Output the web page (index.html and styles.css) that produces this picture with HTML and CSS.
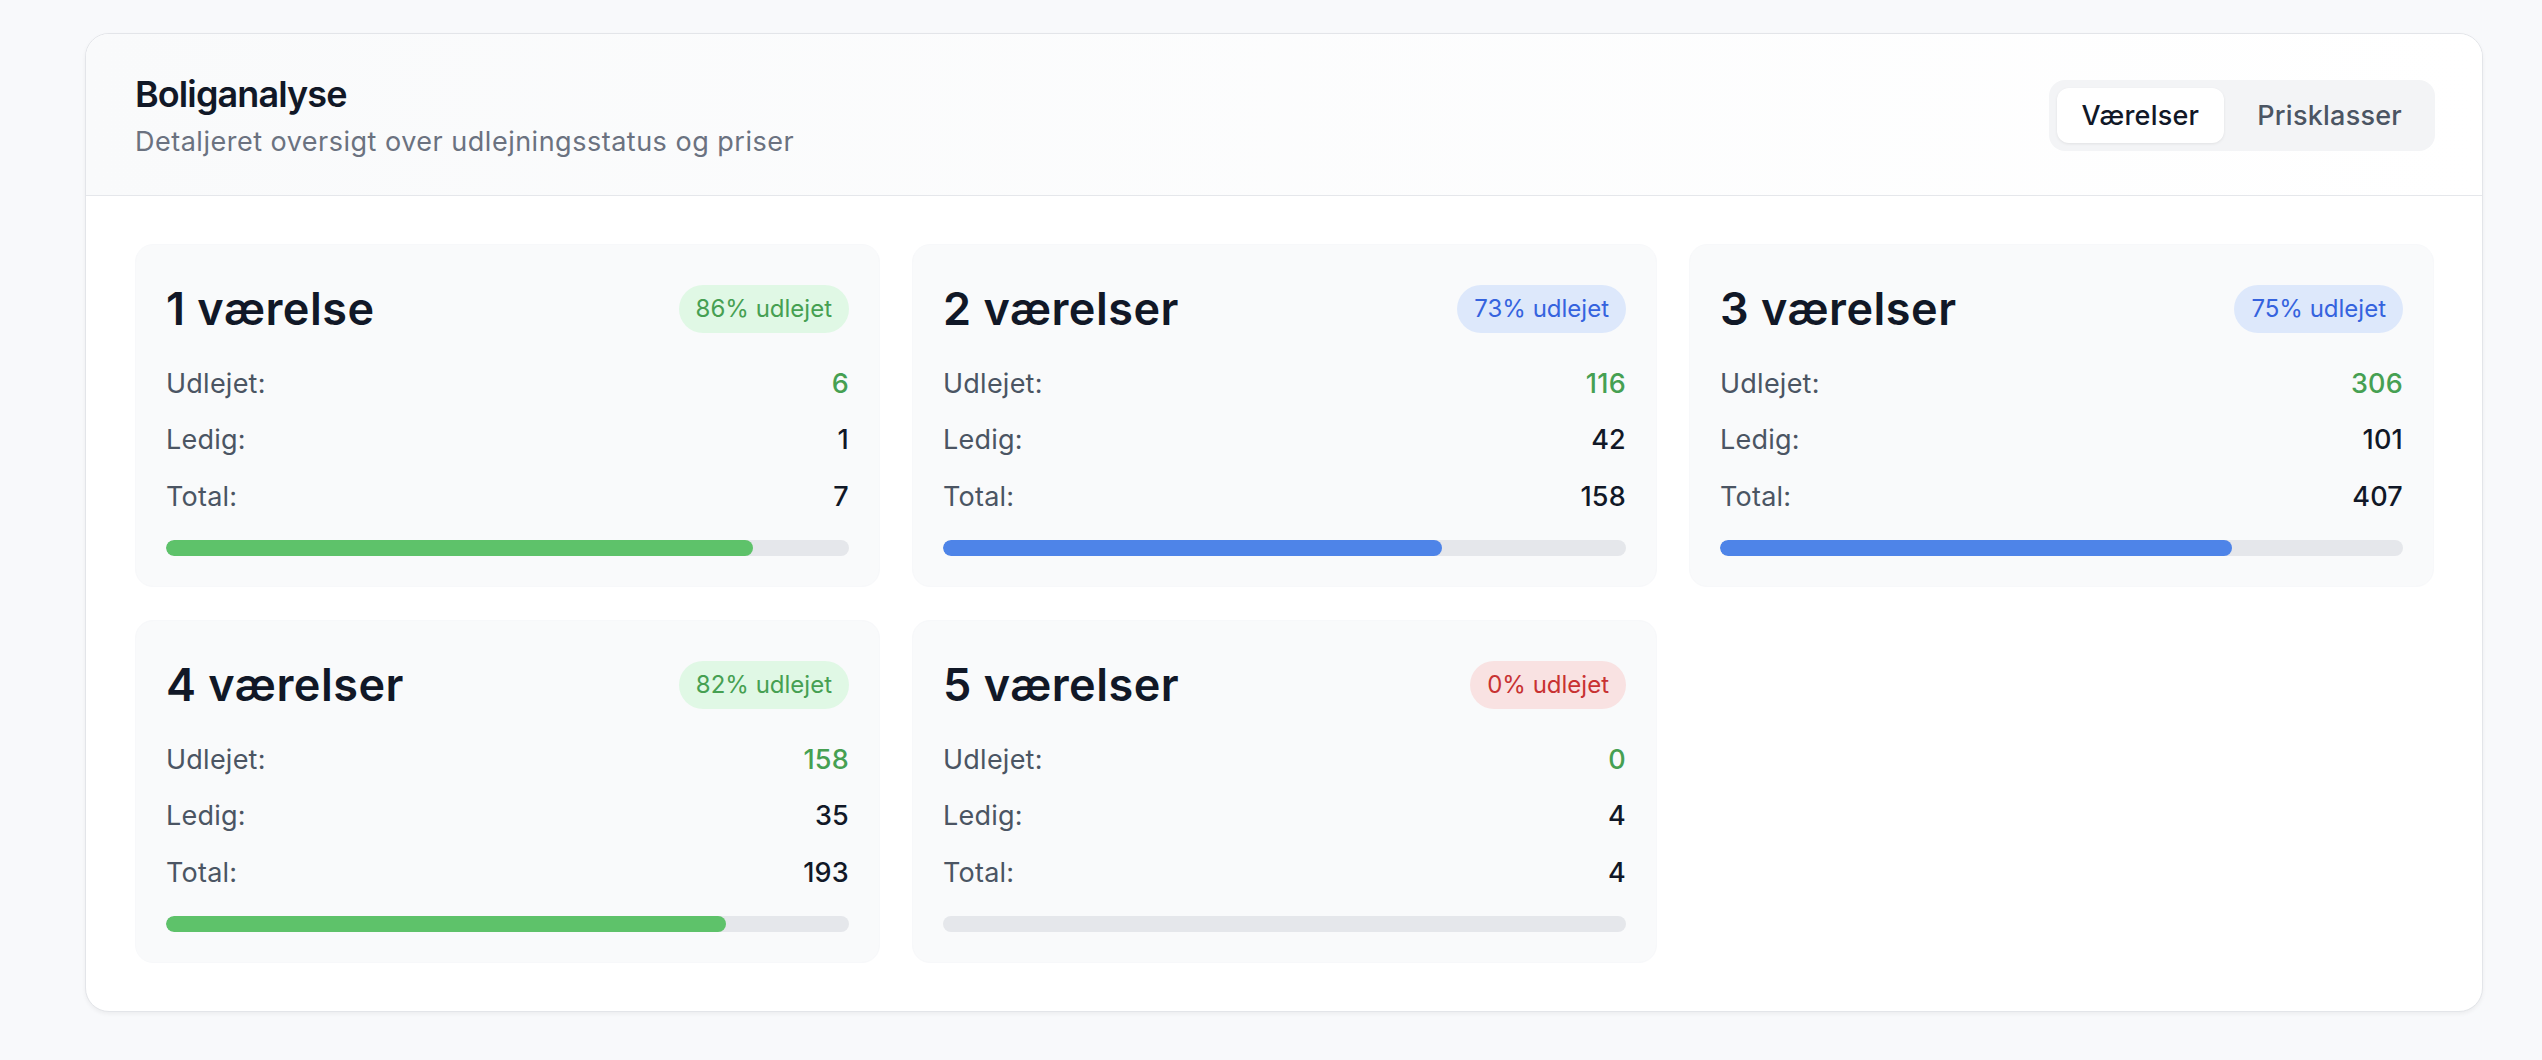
FILE: index.html
```html
<!DOCTYPE html>
<html lang="da">
<head>
<meta charset="utf-8">
<title>Boliganalyse</title>
<link rel="stylesheet" href="styles.css">
</head>
<body>
<div class="page">
  <section class="panel">
    <header class="panel-head">
      <div class="head-text">
        <h1 class="title">Boliganalyse</h1>
        <p class="subtitle">Detaljeret oversigt over udlejningsstatus og priser</p>
      </div>
      <div class="tabs">
        <button class="tab tab-active">Værelser</button>
        <button class="tab">Prisklasser</button>
      </div>
    </header>
    <div class="panel-body">
      <div class="grid">
        <div class="room">
          <div class="room-head">
            <h2 class="room-title">1 værelse</h2>
            <span class="badge badge-green">86% udlejet</span>
          </div>
          <div class="rows">
            <div class="row"><span class="label">Udlejet:</span><span class="val val-green">6</span></div>
            <div class="row"><span class="label">Ledig:</span><span class="val">1</span></div>
            <div class="row"><span class="label">Total:</span><span class="val">7</span></div>
          </div>
          <div class="track"><div class="fill fill-green" style="width: 86%"></div></div>
        </div>
        <div class="room">
          <div class="room-head">
            <h2 class="room-title">2 værelser</h2>
            <span class="badge badge-blue">73% udlejet</span>
          </div>
          <div class="rows">
            <div class="row"><span class="label">Udlejet:</span><span class="val val-green">116</span></div>
            <div class="row"><span class="label">Ledig:</span><span class="val">42</span></div>
            <div class="row"><span class="label">Total:</span><span class="val">158</span></div>
          </div>
          <div class="track"><div class="fill fill-blue" style="width: 73%"></div></div>
        </div>
        <div class="room">
          <div class="room-head">
            <h2 class="room-title">3 værelser</h2>
            <span class="badge badge-blue">75% udlejet</span>
          </div>
          <div class="rows">
            <div class="row"><span class="label">Udlejet:</span><span class="val val-green">306</span></div>
            <div class="row"><span class="label">Ledig:</span><span class="val">101</span></div>
            <div class="row"><span class="label">Total:</span><span class="val">407</span></div>
          </div>
          <div class="track"><div class="fill fill-blue" style="width: 75%"></div></div>
        </div>
        <div class="room">
          <div class="room-head">
            <h2 class="room-title">4 værelser</h2>
            <span class="badge badge-green">82% udlejet</span>
          </div>
          <div class="rows">
            <div class="row"><span class="label">Udlejet:</span><span class="val val-green">158</span></div>
            <div class="row"><span class="label">Ledig:</span><span class="val">35</span></div>
            <div class="row"><span class="label">Total:</span><span class="val">193</span></div>
          </div>
          <div class="track"><div class="fill fill-green" style="width: 82%"></div></div>
        </div>
        <div class="room">
          <div class="room-head">
            <h2 class="room-title">5 værelser</h2>
            <span class="badge badge-red">0% udlejet</span>
          </div>
          <div class="rows">
            <div class="row"><span class="label">Udlejet:</span><span class="val val-green">0</span></div>
            <div class="row"><span class="label">Ledig:</span><span class="val">4</span></div>
            <div class="row"><span class="label">Total:</span><span class="val">4</span></div>
          </div>
          <div class="track"><div class="fill fill-red" style="width: 0%"></div></div>
        </div>
      </div>
    </div>
  </section>
</div>
</body>
</html>
```
FILE: styles.css
```css
* { box-sizing: border-box; }
html, body { margin: 0; padding: 0; }
body {
  background: #f8f9fb;
  font-family: Inter, "Noto Sans", "Liberation Sans", sans-serif;
  color: #111827;
  letter-spacing: 0.015em;
}
.page {
  padding: 33px 59px 40px 85px;
}
.panel {
  background: #ffffff;
  border: 1px solid #e3e5e9;
  border-radius: 24px;
  box-shadow: 0 2px 4px rgba(0, 0, 0, 0.05);
  overflow: hidden;
}
.panel-head {
  display: flex;
  align-items: center;
  justify-content: space-between;
  padding: 36px 48px 35px 49px;
  border-bottom: 1px solid #e5e7eb;
  background: linear-gradient(to right, #f9fafb, #ffffff);
}
.title {
  margin: 0;
  font-size: 36px;
  line-height: 48px;
  font-weight: 600;
  color: #111827;
  letter-spacing: -0.9px;
}
.subtitle {
  margin: 6px 0 0 0;
  font-size: 27px;
  line-height: 36px;
  color: #6b7280;
  letter-spacing: 0.5px;
}
.tabs {
  display: flex;
  gap: 8px;
  padding: 8px;
  background: #f3f4f6;
  border-radius: 16px;
  margin-right: -1px;
}
.tab {
  border: 0;
  background: transparent;
  font-family: inherit;
  letter-spacing: inherit;
  font-size: 27px;
  font-weight: 500;
  color: #4b5563;
  height: 55px;
  padding: 0 25px;
  border-radius: 12px;
}
.tab-active {
  background: #ffffff;
  color: #111827;
  box-shadow: 0 1px 3px rgba(0, 0, 0, 0.08);
}
.panel-body {
  padding: 48px 48px 48px 49px;
}
.grid {
  display: grid;
  grid-template-columns: repeat(3, 1fr);
  column-gap: 32px;
  row-gap: 33px;
}
.room {
  background: #f9fafb;
  border: 1px solid #f7f8fa;
  border-radius: 18px;
  padding: 30px;
}
.room-head {
  display: flex;
  align-items: center;
  justify-content: space-between;
  height: 67.5px;
}
.room-title {
  margin: 0;
  font-size: 45px;
  line-height: 54px;
  font-weight: 600;
  color: #111827;
  letter-spacing: 0.5px;
}
.badge {
  height: 48px;
  line-height: 48px;
  padding: 0 17px;
  border-radius: 24px;
  font-size: 24px;
  font-weight: 400;
  letter-spacing: 0;
}
.badge-green { background: #e0f8e5; color: #46a052; }
.badge-blue { background: #dde8fb; color: #3563de; }
.badge-red { background: #f9e2e2; color: #c83232; }
.rows {
  margin-top: 20px;
  display: flex;
  flex-direction: column;
  gap: 14.25px;
}
.row {
  display: flex;
  justify-content: space-between;
  align-items: center;
  height: 42px;
  font-size: 27px;
}
.label { color: #4b5563; }
.val { color: #111827; font-weight: 500; }
.val-green { color: #46a052; }
.track {
  margin-top: 23px;
  height: 16px;
  border-radius: 8px;
  background: #e5e7eb;
  overflow: hidden;
}
.fill { height: 100%; border-radius: 8px; }
.fill-green { background: #5ec26a; }
.fill-blue { background: #4e84e8; }
.fill-red { background: #ef4444; }
```
